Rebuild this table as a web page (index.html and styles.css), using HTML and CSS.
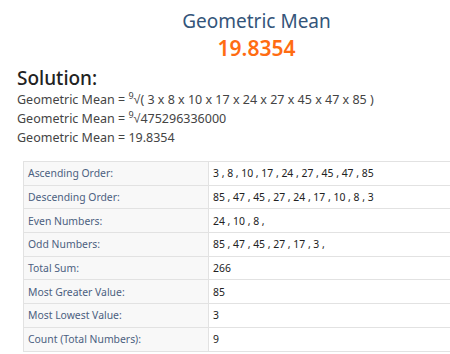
FILE: index.html
```html
<!DOCTYPE html>
<html lang="en">
<head>
    <meta charset="UTF-8">
    <meta name="viewport" content="width=device-width, initial-scale=1.0">
    <title>Geometric Mean</title>
    <link rel="stylesheet" href="styles.css">
</head>
<body>

<div class="result">
    <h2 class="result-title">Geometric Mean</h2>
    <div class="result-value">19.8354</div>
</div>

<div class="solution">
    <h3>Solution:</h3>
    <p>Geometric Mean = <sup>9</sup>&radic;( 3 x 8 x 10 x 17 x 24 x 27 x 45 x 47 x 85 )</p>
    <p>Geometric Mean = <sup>9</sup>&radic;475296336000</p>
    <p>Geometric Mean = 19.8354</p>
</div>

<table class="stats">
    <colgroup><col class="label-col"><col></colgroup>
    <tr><td>Ascending Order:</td><td>3 , 8 , 10 , 17 , 24 , 27 , 45 , 47 , 85</td></tr>
    <tr><td>Descending Order:</td><td>85 , 47 , 45 , 27 , 24 , 17 , 10 , 8 , 3</td></tr>
    <tr><td>Even Numbers:</td><td>24 , 10 , 8 ,</td></tr>
    <tr><td>Odd Numbers:</td><td>85 , 47 , 45 , 27 , 17 , 3 ,</td></tr>
    <tr><td>Total Sum:</td><td>266</td></tr>
    <tr><td>Most Greater Value:</td><td>85</td></tr>
    <tr><td>Most Lowest Value:</td><td>3</td></tr>
    <tr><td>Count (Total Numbers):</td><td>9</td></tr>
</table>

</body>
</html>
```

FILE: styles.css
```css
body {
    font-family: 'Noto Sans', sans-serif;
    background-color: #fff;
    color: #333;
    margin: 0;
    padding: 0 0 0 17px;
    overflow: hidden;
}
.result {
    text-align: center;
    padding-top: 8px;
    padding-left: 46px;
}
.result-title {
    font-size: 19px;
    font-weight: normal;
    color: #34557a;
    margin: 0;
    line-height: 26px;
}
.result-value {
    font-size: 21px;
    font-weight: 600;
    color: #ff6c12;
    line-height: 28px;
}
.solution h3 {
    font-size: 19px;
    font-weight: 500;
    color: #222;
    margin: 4px 0 0 0;
    line-height: 24px;
}
.solution p {
    margin: 0;
    font-size: 12.5px;
    line-height: 19px;
    color: #444;
}
.solution sup {
    font-size: 9px;
    vertical-align: 5px;
    line-height: 0;
}
.stats {
    margin: 14px 0 0 6px;
    border-collapse: collapse;
    table-layout: fixed;
    width: 470px;
    font-size: 10.4px;
}
.stats .label-col {
    width: 185px;
}
.stats td {
    border: 1px solid #e2e2e2;
    height: 22.7px;
    padding: 0 4px;
    color: #222;
    white-space: nowrap;
}
.stats td:first-child {
    background: #f8f8f8;
    color: #4b6080;
}
```
